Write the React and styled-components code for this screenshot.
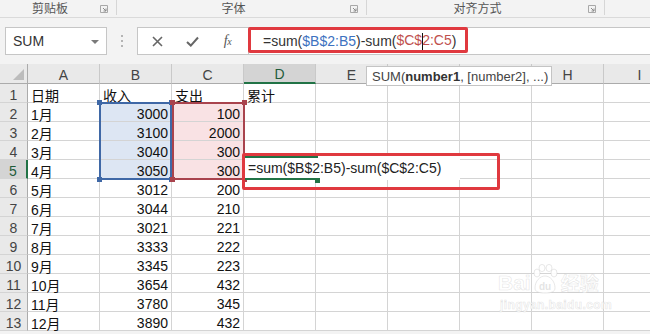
import React from 'react';
import styled, { createGlobalStyle } from 'styled-components';

const GlobalStyle = createGlobalStyle`
  html, body { margin: 0; padding: 0; background: #fff; }
  body { overflow: hidden; }
  *, *::before, *::after { box-sizing: border-box; }
`;

const FONT = `"Liberation Sans", "Noto Sans CJK SC", sans-serif`;
const GREEN = '#217346';

const Page = styled.div`
  position: relative;
  width: 650px;
  height: 334px;
  overflow: hidden;
  background: #f3f3f3;
  font-family: ${FONT};
  color: #222;
`;

/* ---------- ribbon group labels ---------- */
const GroupBar = styled.div`
  display: flex;
  height: 18px;
  border-bottom: 1px solid #dadada;
`;
const Group = styled.div`
  display: flex;
  align-items: center;
  flex: ${p => (p.$w ? `0 0 ${p.$w}px` : '1 1 auto')};
  height: 15px;
  border-right: ${p => (p.$w ? '1px solid #d6d6d6' : 'none')};
`;
const GroupLabel = styled.div`
  flex: 1;
  text-align: center;
  font-family: "Noto Sans CJK SC", sans-serif;
  font-size: 12px;
  line-height: 15px;
  color: #555;
`;
const Launcher = styled.div`
  flex: 0 0 16px;
  display: flex;
  align-items: center;
  justify-content: flex-start;
  padding-top: 2px;
`;

/* ---------- formula bar ---------- */
const FormulaArea = styled.div`
  display: flex;
  align-items: flex-start;
  height: 46px;
  padding-top: 9px;
`;
const NameBox = styled.div`
  flex: 0 0 102px;
  margin-left: 5px;
  height: 28px;
  background: #fff;
  border: 1px solid #c6c6c6;
  display: flex;
  align-items: center;
  justify-content: space-between;
  padding: 0 7px 0 7px;
  font-size: 14px;
  color: #333;
`;
const DropArrow = styled.span`
  width: 0;
  height: 0;
  border-left: 4px solid transparent;
  border-right: 4px solid transparent;
  border-top: 4px solid #7a7a7a;
  margin-top: 1px;
`;
const DotsArea = styled.div`
  flex: 0 0 30px;
  height: 28px;
  display: flex;
  flex-direction: column;
  align-items: center;
  justify-content: center;
  gap: 3px;
`;
const Dot = styled.span`
  width: 2px;
  height: 2px;
  background: #b4b4b4;
`;
const FxBox = styled.div`
  flex: 0 0 111px;
  height: 28px;
  background: #fff;
  border: 1px solid #c6c6c6;
  border-right: none;
  display: flex;
  align-items: center;
  padding-left: 2px;
`;
const FxBtn = styled.div`
  flex: 0 0 35px;
  height: 26px;
  display: flex;
  align-items: center;
  justify-content: center;
  color: #6b6b6b;
`;
const FxText = styled.span`
  font-family: "Liberation Serif", serif;
  font-style: italic;
  font-size: 14px;
  color: #555;
  letter-spacing: -0.5px;
  & > small { font-size: 10px; }
`;
const FormulaInput = styled.div`
  flex: 1;
  height: 28px;
  background: #fff;
  border: 1px solid #c6c6c6;
  border-right: none;
  display: flex;
  align-items: center;
  padding-left: 14px;
  font-size: 14px;
  color: #333;
  white-space: pre;
`;
const Ref = styled.span`
  color: ${p => p.$c};
`;
const Caret = styled.span`
  display: inline-block;
  width: 1px;
  height: 17px;
  background: #111;
  vertical-align: middle;
  margin: 0 -0.5px;
`;

/* ---------- sheet ---------- */
const Sheet = styled.div`
  display: grid;
  grid-template-columns: 28px repeat(9, 72px);
  grid-template-rows: 20px repeat(13, 19px);
  width: max-content;
  background: #fff;
`;
const Corner = styled.div`
  background: #e9e9e9;
  border-right: 1px solid #ababab;
  border-bottom: 1px solid #ababab;
  display: flex;
  align-items: flex-end;
  justify-content: flex-end;
  padding: 0 3px 3px 0;
  &::after {
    content: '';
    width: 0;
    height: 0;
    border-left: 11px solid transparent;
    border-bottom: 11px solid #bcbcbc;
  }
`;
const ColHead = styled.div`
  background: ${p => (p.$active ? '#d4d4d4' : '#e9e9e9')};
  border-right: 1px solid #c9c9c9;
  border-bottom: ${p => (p.$active ? `2px solid ${GREEN}` : '1px solid #ababab')};
  display: flex;
  align-items: center;
  justify-content: center;
  font-size: 14px;
  color: ${p => (p.$active ? '#1f5c3a' : '#444')};
  padding-top: 2px;
  & > span { visibility: ${p => (p.$covered ? 'hidden' : 'visible')}; }
`;
const RowHead = styled.div`
  background: ${p => (p.$active ? '#d4d4d4' : '#e9e9e9')};
  border-right: ${p => (p.$active ? `2px solid ${GREEN}` : '1px solid #ababab')};
  border-bottom: 1px solid #d4d4d4;
  display: flex;
  align-items: center;
  justify-content: center;
  font-size: 14px;
  color: ${p => (p.$active ? '#1f5c3a' : '#444')};
  padding-top: 3px;
`;
const Cell = styled.div`
  background: ${p => p.$fill || '#fff'};
  border-right: 1px solid #d4d4d4;
  border-bottom: 1px solid #d4d4d4;
  display: flex;
  align-items: center;
  justify-content: ${p => (p.$right ? 'flex-end' : 'flex-start')};
  padding: 3px 3px 0 3px;
  font-size: 14px;
  color: #111;
  white-space: nowrap;
  overflow: visible;
`;

/* ---------- overlays ---------- */
const RangeBox = styled.div`
  position: absolute;
  left: ${p => p.$x}px;
  top: ${p => p.$y}px;
  width: ${p => p.$w}px;
  height: ${p => p.$h}px;
  border: 2px solid ${p => p.$c};
  pointer-events: none;
`;
const Handle = styled.span`
  position: absolute;
  width: 5px;
  height: 5px;
  background: ${p => p.$c};
  ${p => (p.$top ? 'top: -4px;' : 'bottom: -4px;')}
  ${p => (p.$left ? 'left: -4px;' : 'right: -4px;')}
`;
const EditBox = styled.div`
  position: absolute;
  left: 245px;
  top: 156px;
  width: 215px;
  height: 24px;
  background: #fff;
  display: flex;
  align-items: center;
  padding-left: 3px;
  font-size: 14px;
  color: #222;
  white-space: pre;
  &::before {
    content: '';
    position: absolute;
    left: 0;
    top: 0;
    width: 73px;
    height: 100%;
    border-top: 2px solid ${GREEN};
    border-bottom: 2px solid ${GREEN};
  }
  &::after {
    content: '';
    position: absolute;
    left: 70px;
    bottom: -3px;
    width: 5px;
    height: 5px;
    background: ${GREEN};
  }
`;
const Tooltip = styled.div`
  position: absolute;
  left: 366px;
  top: 66px;
  width: 186px;
  height: 20px;
  background: #fff;
  border: 1px solid #c4c4c4;
  font-size: 13px;
  color: #444;
  display: flex;
  align-items: center;
  padding-left: 5px;
  white-space: pre;
  & b { color: #333; }
`;
const RedFrame = styled.div`
  position: absolute;
  left: ${p => p.$x}px;
  top: ${p => p.$y}px;
  width: ${p => p.$w}px;
  height: ${p => p.$h}px;
  border: 3px solid #e0393f;
  border-radius: 2px;
  pointer-events: none;
`;
const Watermark = styled.div`
  position: absolute;
  left: 498px;
  top: 264px;
  display: flex;
  flex-direction: column;
  align-items: flex-start;
  color: rgba(255, 255, 255, 0.9);
  -webkit-text-stroke: 0.6px rgba(190, 190, 190, 0.4);
  pointer-events: none;
`;
const WmTop = styled.div`
  display: flex;
  align-items: flex-end;
  font-size: 21px;
  font-weight: bold;
  line-height: 22px;
  font-family: "Liberation Sans", sans-serif;
`;
const WmCn = styled.span`
  font-family: "Noto Sans CJK SC", sans-serif;
  font-size: 19px;
  margin-left: 2px;
`;
const WmSub = styled.div`
  font-size: 12px;
  font-weight: bold;
  margin-top: 4px;
  letter-spacing: 0.4px;
  padding-left: 2px;
`;

const COLS = ['A', 'B', 'C', 'D', 'E', 'F', 'G', 'H', 'I'];
const COVERED = ['F', 'G'];
const DATA = [
  ['日期', '收入', '支出', '累计'],
  ['1月', '3000', '100'],
  ['2月', '3100', '2000'],
  ['3月', '3040', '300'],
  ['4月', '3050', '300'],
  ['5月', '3012', '200'],
  ['6月', '3044', '210'],
  ['7月', '3021', '221'],
  ['8月', '3333', '222'],
  ['9月', '3345', '223'],
  ['10月', '3654', '432'],
  ['11月', '3780', '345'],
  ['12月', '3890', '432'],
];

const LauncherIcon = () => (
  <svg width="8" height="8" viewBox="0 0 8 8">
    <path d="M0.5 0.5 H7.5 V7.5 H0.5 Z" fill="none" stroke="#a8a8a8" strokeWidth="1" />
    <path d="M3 3 L6 6 M6 3.5 V6 H3.5" fill="none" stroke="#8a8a8a" strokeWidth="1" />
  </svg>
);

const Paw = () => (
  <svg width="28" height="30" viewBox="0 0 28 30">
    <g fill="rgba(255,255,255,0.9)" stroke="rgba(190,190,190,0.45)" strokeWidth="0.8">
      <ellipse cx="6" cy="9" rx="3" ry="4" />
      <ellipse cx="11" cy="4" rx="3" ry="3.6" />
      <ellipse cx="18" cy="4" rx="3" ry="3.6" />
      <ellipse cx="23" cy="9" rx="3" ry="4" />
      <path d="M4 24 C4 17 9 12 14 12 C19 12 24 17 24 24 C24 28 20 29 14 29 C8 29 4 28 4 24 Z" />
    </g>
    <text x="14" y="26" textAnchor="middle" fontSize="10" fontWeight="bold" fontFamily="Liberation Sans, sans-serif" fill="rgba(210,210,210,0.6)">du</text>
  </svg>
);

export default function App() {
  return (
    <>
      <GlobalStyle />
      <Page>
        <GroupBar>
          <Group $w={117}>
            <GroupLabel>剪贴板</GroupLabel>
            <Launcher><LauncherIcon /></Launcher>
          </Group>
          <Group $w={250}>
            <GroupLabel>字体</GroupLabel>
            <Launcher><LauncherIcon /></Launcher>
          </Group>
          <Group $w={238}>
            <GroupLabel>对齐方式</GroupLabel>
            <Launcher><LauncherIcon /></Launcher>
          </Group>
          <Group />
        </GroupBar>

        <FormulaArea>
          <NameBox>
            <span>SUM</span>
            <DropArrow />
          </NameBox>
          <DotsArea>
            <Dot /><Dot /><Dot />
          </DotsArea>
          <FxBox>
            <FxBtn>
              <svg width="11" height="11" viewBox="0 0 11 11">
                <path d="M1 1 L10 10 M10 1 L1 10" stroke="#666" strokeWidth="1.6" fill="none" />
              </svg>
            </FxBtn>
            <FxBtn>
              <svg width="13" height="11" viewBox="0 0 13 11">
                <path d="M1 6 L4.8 9.6 L12 1.5" stroke="#666" strokeWidth="2" fill="none" />
              </svg>
            </FxBtn>
            <FxBtn>
              <FxText>f<small>x</small></FxText>
            </FxBtn>
          </FxBox>
          <FormulaInput>
            =sum(<Ref $c="#3d72c0">$B$2:B5</Ref>)-sum(<Ref $c="#c0504d">$C$<Caret />2:C5</Ref>)
          </FormulaInput>
        </FormulaArea>

        <Sheet>
          <Corner />
          {COLS.map(c => (
            <ColHead key={c} $active={c === 'D'} $covered={COVERED.includes(c)}>
              <span>{c}</span>
            </ColHead>
          ))}
          {DATA.map((row, i) => {
            const r = i + 1;
            const sel = r >= 2 && r <= 5;
            return (
              <React.Fragment key={r}>
                <RowHead $active={r === 5}>{r}</RowHead>
                {COLS.map((c, ci) => {
                  const v = row[ci];
                  const right = r > 1 && (c === 'B' || c === 'C');
                  let fill;
                  if (sel && c === 'B') fill = '#dde6f3';
                  if (sel && c === 'C') fill = '#f9e2e4';
                  return (
                    <Cell key={c} $right={right} $fill={fill}>
                      {v}
                    </Cell>
                  );
                })}
              </React.Fragment>
            );
          })}
        </Sheet>

        <RangeBox $x={99} $y={102} $w={73} $h={78} $c="#3f68a6">
          <Handle $c="#3f68a6" $top $left />
          <Handle $c="#3f68a6" $top />
          <Handle $c="#3f68a6" $left />
          <Handle $c="#3f68a6" />
        </RangeBox>
        <RangeBox $x={172} $y={102} $w={73} $h={78} $c="#a9434d">
          <Handle $c="#a9434d" $top $left />
          <Handle $c="#a9434d" $top />
          <Handle $c="#a9434d" $left />
          <Handle $c="#a9434d" />
        </RangeBox>

        <EditBox>=sum($B$2:B5)-sum($C$2:C5)</EditBox>

        <Tooltip>
          SUM(<b>number1</b>, [number2], ...)
        </Tooltip>

        <RedFrame $x={248} $y={27} $w={220} $h={26} />
        <RedFrame $x={242} $y={153} $w={258} $h={37} />

        <Watermark>
          <WmTop>
            <span>Bai</span>
            <Paw />
            <WmCn>经验</WmCn>
          </WmTop>
          <WmSub>jingyan.baidu.com</WmSub>
        </Watermark>
      </Page>
    </>
  );
}
